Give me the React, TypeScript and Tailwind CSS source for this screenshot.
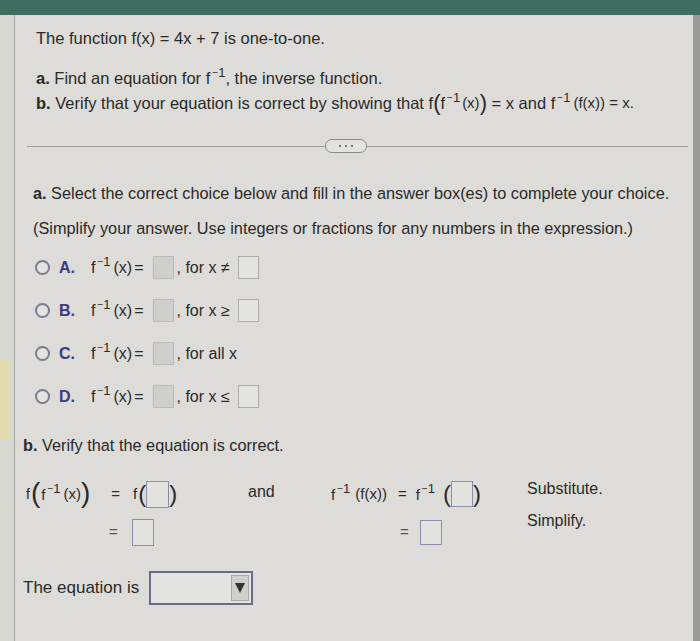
import React from "react";

const FInv = ({ size = 13 }: { size?: number }) => (
  <span className="inline-block leading-none whitespace-nowrap">
    f
    <span className="relative -top-[7px] ml-[2px]" style={{ fontSize: size }}>
      <span className="text-[10px] relative -top-[1px]">−</span>1
    </span>
  </span>
);

const GrayBox = () => (
  <span className="inline-block w-[21px] h-[23px] bg-[#cfcfcc] border border-[#bababa]" />
);
const WhiteBox = () => (
  <span className="inline-block w-[21px] h-[23px] bg-[#e4e4e1] border border-[#acacaa]" />
);
const AnsBox = ({ w = 22, h = 26 }: { w?: number; h?: number }) => (
  <span
    className="inline-block bg-[#e2e2df] border border-[#8c8cab]"
    style={{ width: w, height: h }}
  />
);

const Radio = () => (
  <span className="inline-block w-[15px] h-[15px] rounded-full border-2 border-[#7c7c8e] bg-[#e2e2de]" />
);

function Option({ letter, cond, box = true }: { letter: string; cond: string; box?: boolean }) {
  return (
    <div className="flex items-center h-[43px] text-[16px]">
      <span className="ml-[2px] flex"><Radio /></span>
      <span className="ml-[9px] w-[32px] font-bold text-[#3a3a86] text-[16px]">{letter}.</span>
      <FInv />
      <span className="ml-[3px]">(x)</span>
      <span className="ml-[2px]">=</span>
      <span className="ml-[9px] flex"><GrayBox /></span>
      <span className="ml-[3px]">, {cond}</span>
      {box && <span className="ml-[8px] flex"><WhiteBox /></span>}
    </div>
  );
}

export default function App() {
  return (
    <div
      className="w-[700px] h-[641px] overflow-hidden bg-[#dddcd8] text-[#2a2a2a] flex flex-col"
      style={{ fontFamily: '"Liberation Sans", Arial, sans-serif' }}
    >
      <div className="h-[15px] bg-[#3f6e60] shrink-0" />
      <div className="flex flex-1">
        <div className="w-[15px] border-r border-[#a8a8a4] bg-[#d8d8d2] flex flex-col shrink-0">
          <div className="h-[345px]" />
          <div className="h-[80px] w-[9px] bg-[#e0dcae]" />
        </div>
        <div className="flex-1 flex flex-col">
          {/* problem statement */}
          <div className="pl-[21px] pt-[12px] text-[16.5px]">
            <div className="h-[22px] flex items-center">The function f(x) = 4x + 7 is one-to-one.</div>
            <div className="mt-[17px] h-[24px] flex items-center whitespace-pre">
              <b>a.</b> Find an equation for <FInv />, the inverse function.
            </div>
            <div className="mt-[1px] h-[24px] flex items-center whitespace-pre">
              <b>b.</b> Verify that your equation is correct by showing that f
              <span className="text-[22px] leading-none">(</span>
              <FInv />
              <span className="ml-[2px] text-[15px]">(x)</span>
              <span className="text-[22px] leading-none">)</span>
              {" = x and "}
              <FInv />
              <span className="ml-[3px] text-[15px]">(f(x)) = x.</span>
            </div>
          </div>

          {/* separator */}
          <div className="relative mt-[24px] ml-[12px] mr-[5px] h-[14px] flex items-center">
            <div className="w-full h-[1px] bg-[#9a9a98]" />
            <div className="absolute left-[298px] top-0 w-[42px] h-[14px] rounded-full border border-[#8a8a88] bg-[#e2e2de] flex items-center justify-center gap-[4px]">
              <span className="w-[2px] h-[2px] bg-[#555] rounded-full" />
              <span className="w-[2px] h-[2px] bg-[#555] rounded-full" />
              <span className="w-[2px] h-[2px] bg-[#555] rounded-full" />
            </div>
          </div>

          {/* part a */}
          <div className="pl-[18px] pt-[28px] text-[16.3px]">
            <div className="h-[24px] flex items-center whitespace-pre">
              <b>a.</b> Select the correct choice below and fill in the answer box(es) to complete your choice.
            </div>
            <div className="mt-[11px] h-[24px] flex items-center whitespace-nowrap">
              (Simplify your answer. Use integers or fractions for any numbers in the expression.)
            </div>
          </div>
          <div className="pl-[18px] pt-[6px]">
            <Option letter="A" cond="for x ≠" />
            <Option letter="B" cond="for x ≥" />
            <Option letter="C" cond="for all x" box={false} />
            <Option letter="D" cond="for x ≤" />
          </div>

          {/* part b */}
          <div className="pl-[8px] pt-[15px] text-[16.3px]">
            <div className="h-[24px] flex items-center whitespace-pre">
              <b>b.</b> Verify that the equation is correct.
            </div>
          </div>
          <div className="pl-[8px] pt-[18px] flex text-[16px]">
            <div className="w-[225px] flex flex-col">
              <div className="flex items-center h-[38px]">
                <span className="ml-[3px] text-[14px]">f</span>
                <span className="ml-[1px] text-[28px] leading-none relative -top-[1px] font-light">(</span>
                <span className="ml-[1px] text-[15px] flex"><FInv /></span>
                <span className="ml-[3px] text-[15px]">(x)</span>
                <span className="text-[28px] leading-none relative -top-[1px] font-light">)</span>
                <span className="ml-[21px] text-[15px]">=</span>
                <span className="ml-[13px] text-[15px]">f</span>
                <span className="ml-[1px] text-[24px] leading-none">(</span>
                <AnsBox w={23} h={27} />
                <span className="text-[24px] leading-none">)</span>
              </div>
              <div className="flex items-center h-[38px]">
                <span className="ml-[86px] text-[15px] text-[#555]">=</span>
                <span className="ml-[14px] flex"><AnsBox w={22} h={27} /></span>
              </div>
            </div>
            <div className="w-[82px] h-[34px] flex items-center text-[16px]">and</div>
            <div className="w-[197px] flex flex-col text-[15px]">
              <div className="flex items-center h-[38px]">
                <span className="ml-[1px] flex"><FInv /></span>
                <span className="ml-[5px]">(f(x))</span>
                <span className="ml-[11px]">=</span>
                <span className="ml-[9px] flex"><FInv /></span>
                <span className="ml-[8px] text-[24px] leading-none">(</span>
                <AnsBox w={22} h={26} />
                <span className="text-[24px] leading-none">)</span>
              </div>
              <div className="flex items-center h-[38px]">
                <span className="ml-[70px] text-[#555]">=</span>
                <span className="ml-[11px] flex"><AnsBox w={22} h={25} /></span>
              </div>
            </div>
            <div className="flex flex-col text-[16px]">
              <div className="h-[28px] flex items-center">Substitute.</div>
              <div className="h-[36px] flex items-center">Simplify.</div>
            </div>
          </div>

          <div className="pl-[8px] pt-[20px] flex items-center text-[17px]">
            <span>The equation is</span>
            <div className="ml-[10px] w-[104px] h-[34px] border-2 border-[#6a6a8a] bg-[#e4e4e0] flex justify-end items-center pr-[2px]">
              <div className="w-[18px] h-[26px] bg-[#cfcfcc] border border-[#aaa] flex items-center justify-center">
                <svg width="12" height="12" viewBox="0 0 12 12"><path d="M1 1 H11 L6 11 Z" fill="#333" /></svg>
              </div>
            </div>
          </div>
        </div>
        <div className="w-[7px] bg-[#9a9a96] shrink-0" />
      </div>
    </div>
  );
}
